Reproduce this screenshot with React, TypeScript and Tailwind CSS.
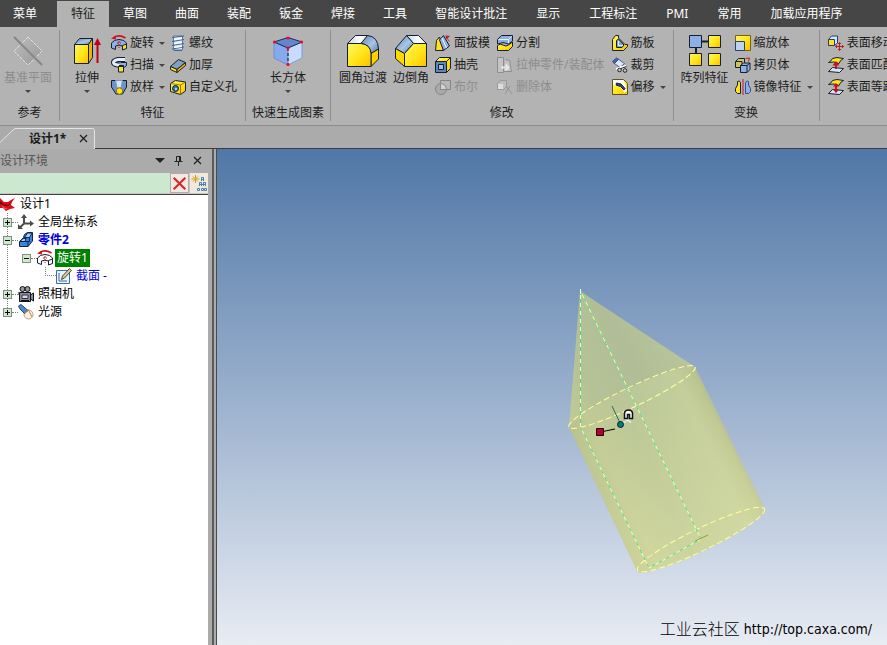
import type { ReactNode } from 'react'
import clsx from 'clsx'

const MENU = ['特征', '草图', '曲面', '装配', '钣金', '焊接', '工具']
const MENU_MORE = ['智能设计批注', '显示', '工程标注', 'PMI', '常用', '加载应用程序']

const K = '#16202c'
const BLUE = '#8fb0e6'
const LIGHT = '#d6e4fa'
const YELLOW = '#ffe11f'
const GOLD = '#f0b400'

function Svg({ size = 16, children }: { size?: number; children: ReactNode }) {
  return (
    <svg width={size} height={size} viewBox={`0 0 ${size} ${size}`} fill="none" stroke={K} strokeLinejoin="round" className="shrink-0" aria-hidden="true">
      {children}
    </svg>
  )
}

/* ---- gradients shared by all icons ---- */
function Defs() {
  return (
    <svg width="0" height="0" className="absolute" aria-hidden="true">
      <defs>
        <linearGradient id="gy" x1="0" y1="0" x2="1" y2="1">
          <stop offset="0" stopColor="#fff36a" />
          <stop offset=".5" stopColor="#ffe81c" />
          <stop offset="1" stopColor="#ffbe00" />
        </linearGradient>
        <linearGradient id="gb" x1="0" y1="0" x2="1" y2="1">
          <stop offset="0" stopColor="#5a82b4" />
          <stop offset=".55" stopColor="#a9c6e8" />
          <stop offset="1" stopColor="#4d77a8" />
        </linearGradient>
        <linearGradient id="gw" x1="0" y1="0" x2="1" y2="0">
          <stop offset="0" stopColor="#c4d4e4" />
          <stop offset=".6" stopColor="#ffffff" />
          <stop offset="1" stopColor="#dce8f4" />
        </linearGradient>
        <linearGradient id="gg" x1="0" y1="0" x2="1" y2="1">
          <stop offset="0" stopColor="#c2c2c2" />
          <stop offset="1" stopColor="#8f8f8f" />
        </linearGradient>
      </defs>
    </svg>
  )
}

/* ---- large icons ---- */
const PlaneIcon = () => (
  <Svg size={32}>
    <path d="M2 2 30 30" stroke="#858585" strokeWidth="2" />
    <path d="M16 2 30 16 16 30 2 16Z" fill="url(#gg)" fillOpacity=".75" stroke="#e2e2e2" strokeDasharray="3 1" />
    <path d="M8 8 24 24" stroke="#8a8a8a" strokeWidth="2" />
  </Svg>
)

const ExtrudeIcon = () => (
  <Svg size={32}>
    <path d="M3.5 9.5H17.5V28.5H3.5Z" fill="url(#gy)" />
    <path d="M3.5 9.5 8.5 3.5H21.5L17.5 9.5Z" fill="url(#gb)" />
    <path d="M17.5 9.5 21.5 3.5V22.5L17.5 28.5Z" fill={GOLD} />
    <path d="M26.5 8V28" stroke="#c00010" strokeWidth="2" />
    <path d="M26.5 3 30 10H23Z" fill="#c00010" stroke="none" />
  </Svg>
)

const CuboidIcon = () => (
  <Svg size={32}>
    <path d="M2 7V23L16 30V13Z" fill="#86a9f0" stroke="#6f8fd0" />
    <path d="M30 7V23L16 30V13Z" fill="#c9dcfb" stroke="#7f9cd6" />
    <path d="M2 7 16 2.500 30 7 16 13Z" fill="#6685cc" stroke="#1c2a55" />
    <path d="M16 13V29" stroke="#101010" strokeDasharray="3 2" />
    <g fill="#f00818" stroke="none">
      <circle cx="2.500" cy="7" r="1.600" />
      <circle cx="16" cy="3" r="1.600" />
      <circle cx="29.500" cy="7" r="1.600" />
      <circle cx="16" cy="13" r="1.600" />
      <circle cx="16" cy="29.500" r="1.600" />
    </g>
  </Svg>
)

const FilletIcon = () => (
  <Svg size={32}>
    <path d="M.5 8.500 8.500.5H21L14 8.500Z" fill="url(#gw)" />
    <path d="M14 8.500Q23.500 9.500 24 18.500L31.500 14Q31 1.500 20.500.5Z" fill="url(#gb)" />
    <path d="M24 18.500 31.500 14V24L24 31.500Z" fill="#ffd000" />
    <path d="M.5 8.500H14Q23.500 9.500 24 18.500V31.500H.5Z" fill="url(#gy)" />
  </Svg>
)

const ChamferIcon = () => (
  <Svg size={32}>
    <path d="M11.500.5H23.500L31.500 8.500H18.500Z" fill="url(#gw)" />
    <path d="M.5 13.500 11.500.5 18.500 8.500 9.500 18.500Z" fill="url(#gb)" />
    <path d="M.5 13.500 9.500 18.500V31.500L.5 23.500Z" fill="#ffd800" />
    <path d="M9.500 18.500 18.500 8.500H31.500V31.500H9.500Z" fill="url(#gy)" />
  </Svg>
)

const ArrayIcon = () => (
  <Svg size={32}>
    <path d="M12 6.500H20M7 12V20" strokeWidth="2" />
    <path d="M.5.5H12.500V12.500H.5Z" fill={BLUE} />
    <path d="M19.500.5H31.500V12.500H19.500Z" fill="url(#gy)" />
    <path d="M.5 18.500H12.500V30.500H.5Z" fill="url(#gy)" />
    <path d="M19.500 18.500H31.500V30.500H19.500Z" fill="url(#gy)" />
  </Svg>
)

/* ---- small icons ---- */
const RevolveIcon = ({ plain = false }: { plain?: boolean }) => (
  <Svg>
    <path d="M.5 8Q3 4.500 8 4.500T15.500 8V13L11.500 14.500V11Q8 9.500 4.500 11V14.500L.5 13Z" fill={plain ? '#fff' : BLUE} />
    <path d="M11.500 10.500 15.500 9V13.500L11.500 15Z" fill={plain ? '#fff' : YELLOW} />
    <path d="M8 6V13M6 8H10" stroke="#c01020" strokeDasharray="2 1" />
    <path d="M3 2.500Q8-1 14.500 3" stroke="#d01020" strokeWidth="1.500" />
    <path d="M0 3.500 4.500.5 5 4.500Z" fill="#d01020" stroke="none" />
  </Svg>
)

const SweepIcon = () => (
  <Svg>
    <path d="M14 2.500H7Q2.500 3.500 2.500 5.500T7 8H13" strokeWidth="5" />
    <path d="M14 2.500H7Q2.500 3.500 2.500 5.500T7 8H13" stroke="#e2edf8" strokeWidth="3" />
    <path d="M10 5.500H15.500V8.500L12.500 11V8.500H8" fill={BLUE} />
    <path d="M7.500 9.500H12.500V15H7.500Z" fill={YELLOW} />
  </Svg>
)

const LoftIcon = () => (
  <Svg>
    <path d="M.5 1.500H15.500V8L11.500 15H5L.5 8Z" fill="#6c94cc" />
    <path d="M4.500 1.500H11.500L10 9H6Z" fill={LIGHT} stroke="#7795bd" />
    <circle cx="8.500" cy="12" r="3.200" fill={YELLOW} stroke="#8a7400" />
  </Svg>
)

const ThreadIcon = () => (
  <Svg>
    <path d="M3.500 1V15H12.500V1Z" fill="#dbe8f6" stroke="#5a7ba4" />
    <path d="M2 2.500 14 1M2 6.500 14 4.500M2 10.500 14 8.500M2 14 14 12M4 15.500H12" stroke="#44658f" />
    <path d="M4 4.500 12 3.500M4 8.500 12 7.500M4 12.500 12 11.500" stroke="#fff" />
  </Svg>
)

const ThickenIcon = () => (
  <Svg>
    <path d="M.5 9.500 8.500 2.500 15.500 5.500 7 12.500Z" fill="#7f9fc4" />
    <path d="M.5 9.500 7 12.500V15.500L.5 12.500Z" fill={YELLOW} />
    <path d="M7 12.500 15.500 5.500V8.500L7 15.500Z" fill={GOLD} />
  </Svg>
)

const HoleIcon = () => (
  <Svg>
    <path d="M.5 4.500 5.500 1.500 15.500 3V12L10.500 15.500.5 12.500Z" fill="url(#gy)" />
    <path d="M10.500 6 15.500 3M10.500 6V15.500M.5 4.500 10.500 6" stroke="#a07800" />
    <circle cx="5.500" cy="9.500" r="3" fill="#3d74b0" />
    <circle cx="6" cy="10" r="1.200" fill="#a8d0f0" stroke="none" />
  </Svg>
)

const DraftIcon = () => (
  <Svg>
    <path d="M1.500 5.500 4.500 2 8.500 15.500H.5Z" fill={YELLOW} />
    <path d="M4.500 5 8.500.5 14.500 11 8.500 15.500Z" fill={BLUE} />
    <path d="M7 3 11.500 13" stroke="#fff" />
    <path d="M11 2 15 7" stroke="#b02028" strokeDasharray="2 1" />
    <path d="M10.500.5 15 1 11.500 4.500Z" fill="#b02028" stroke="none" />
  </Svg>
)

const ShellIcon = () => (
  <Svg>
    <path d="M.5 4.500 4.500.5H15.500V11.500L11.500 15.500Z" fill="url(#gy)" />
    <path d="M.5 4.500H11.500V15.500H.5Z" fill="#5f86b8" />
    <path d="M3.500 7.500H8.500V12.500H3.500Z" fill="#9dbfe8" />
    <path d="M11.500 4.500 15.500.5" />
  </Svg>
)

const BooleanIcon = () => (
  <Svg>
    <circle cx="6" cy="10" r="5.500" stroke="#858585" fill="#aaa" />
    <path d="M5.500 1.500H15.500V10.500H5.500Z" stroke="#858585" fill="#b8b8b8" />
    <path d="M5.500 4.500Q11 5 11.500 10.500H5.500Z" fill="#d2d2d2" stroke="#8a8a8a" />
  </Svg>
)

const SplitIcon = () => (
  <Svg>
    <path d="M.5 4.500 4.500 .5H15.500V6L11.500 9 6 7.500.5 9Z" fill={BLUE} />
    <path d="M1.500 4.500H11.500L14.500 1.500M11.500 4.500V8" stroke="#e8f2ff" />
    <path d="M.5 10.500Q3 8 6 10T11.500 10L15.500 7V11.500L11.500 15.500H.5Z" fill="url(#gy)" />
  </Svg>
)

const ExtrudePartIcon = () => (
  <Svg>
    <path d="M.5.5H6.500V15.500H.5ZM8.500 2.500 12.500 3.500 14.500 14.500H6.500" stroke="#8e8e8e" fill="#c4c4c4" />
    <path d="M4 10.500H11M8.500 7.500 11.500 10.500 8.500 13.500" stroke="#e6e6e6" strokeWidth="2" />
  </Svg>
)

const DeleteBodyIcon = () => (
  <Svg>
    <path d="M.5 4.500 3.500 1.500H9.500V7.500L6.500 10.500H.5Z" stroke="#999" fill="#bdbdbd" />
    <path d="M1 5H6V10H1Z" fill="#dedede" stroke="none" />
    <path d="M9 7 15 15M13 7 8 15" stroke="#929292" />
  </Svg>
)

const RibIcon = () => (
  <Svg>
    <path d="M.5 4.500 3.500.5H6.500V3L13 9.500H15.500V11.500L11.500 15.500H.5Z" fill="url(#gy)" />
    <path d="M4.500 5.500 6.500 4 12 10 10 12.500H4.500Z" fill="#7ba0d4" />
    <path d="M6.500 6V10.500H11" stroke="#e8f2ff" />
  </Svg>
)

const TrimIcon = () => (
  <Svg>
    <path d="M1 5.500 5.500 1.500 12.500 6.500 8 10.500Z" fill="#dce6f6" stroke="#4c6290" />
    <path d="M.5 4.500 4.500 1 6.500 2.500 2.500 6.500Z" fill="#4a68a4" stroke="#3a5080" />
    <path d="M4 12 14 9M8 9.500 13 13" stroke="#fff" strokeWidth="2" />
    <circle cx="7.500" cy="13" r="1.800" stroke="#222" fill="#c8c8c8" />
    <circle cx="13" cy="13.500" r="1.800" stroke="#222" fill="#c8c8c8" />
    <path d="M9 11.500 14.500 9.500" />
  </Svg>
)

const OffsetIcon = () => (
  <Svg>
    <path d="M.5.500H11.500L15.500 4.500V15.500H.5Z" fill="url(#gy)" stroke="#5c5320" />
    <path d="M1 1H11L13 4 15 12 12 14Q10 6 1 6Z" fill="#fff" stroke="none" />
    <path d="M4.500 4 9 5 13 9.500 12 11 8.500 7.500 4 6Z" fill="#2b4a7c" />
  </Svg>
)

const ScaleIcon = () => (
  <Svg>
    <path d="M.5.5H15.500V15.500H.5Z" fill="url(#gy)" stroke="#7a6500" />
    <path d="M.5 6.500H9.500V15.500H.5Z" fill="#bcd3f2" stroke="#25436e" />
  </Svg>
)

const CopyBodyIcon = () => (
  <Svg>
    <path d="M.5 4.500 3.500 1.500H9.500V8.500L7 10.500H.5Z" fill="#cfc45a" />
    <path d="M.5 4.500H7V10.500" />
    <path d="M5.500 8.500 8.500 6H15V12.500L12 15.500H5.500Z" fill={BLUE} />
    <path d="M5.500 8.500H12V15.500M12 8.500 15 6" />
    <path d="M10.500 1.500 14.500 1 13.500 4.500" stroke="#b02028" />
  </Svg>
)

const MirrorIcon = () => (
  <Svg>
    <path d="M.5 9.500 2.500 6V2.500Q5.500 1 5.500 5V14.500H2.500L.5 12.500Z" fill={YELLOW} />
    <path d="M15.500 9.500 13.500 6V2.500Q10.500 1 10.500 5V14.500H13.500L15.500 12.500Z" fill={BLUE} stroke="#2c4f98" />
    <path d="M8 0V16" stroke="#c81828" />
  </Svg>
)

const MoveFaceIcon = () => (
  <Svg>
    <path d="M.5 4.500 3.500 1H9.500V8L6.500 10.500H.5Z" fill={LIGHT} stroke="#23406c" />
    <path d="M.5 4.500H6.500V10.500H.5Z" fill={YELLOW} stroke="#23406c" />
    <path d="M11.500 8V15.500M8 11.500H15.500" stroke="#b82020" />
    <path d="M10 9 11.500 7.500 13 9M10 14 11.500 15.500 13 14M9 10 7.500 11.500 9 13M14 10 15.500 11.500 14 13" stroke="#b82020" />
  </Svg>
)

const FacesBase = () => (
  <>
    <path d="M.5 5.500Q3 4.500 4.500 1.500L9 .5 15.500 1.500Q12 3 11 6.500L6 5Z" fill={YELLOW} />
    <path d="M.5 14.500 4.500 10.500 15.500 11.500 11.500 15.500Z" fill={LIGHT} />
    <path d="M8 6V12" stroke="#c81020" strokeWidth="2" />
  </>
)

const MatchFaceIcon = () => (
  <Svg>
    <FacesBase />
    <path d="M8 4 11.500 8.500H4.500Z" fill="#c81020" stroke="none" />
  </Svg>
)

const EqualFaceIcon = () => (
  <Svg>
    <FacesBase />
    <path d="M8 4 11 7.500H5ZM8 14 11 10.500H5Z" fill="#c81020" stroke="none" />
  </Svg>
)

/* ---- tree icons ---- */
const RootIcon = () => (
  <Svg>
    <g stroke="none">
      <path d="M0 2 4 6 8 6 11 4 15 2 12 6 11 9 15 12 10 13 6 15 3 12 0 12Z" fill="#d8101c" />
      <path d="M0 5 4 8 8 9 11 5 9 10 5 10 0 8Z" fill="#7c0008" />
      <path d="M1 9 5 12 9 12 4 13Z" fill="#ff6a6a" />
    </g>
  </Svg>
)

const AxesIcon = () => (
  <Svg>
    <path d="M6 9V2M6 9.500H14M6 9.500 2 13.500" stroke="#4b4b4b" strokeWidth="2" />
    <path d="M6 0 9 4H3ZM16 9.500 12 6.500V12.500ZM0 15V10L5 15Z" fill="#4b4b4b" stroke="none" />
  </Svg>
)

const PartIcon = () => (
  <Svg>
    <path d="M1.500 9.500 5.500 5.500 6.500 2.500 9.500.5H14.500V9L10 14.500H1.500Z" fill="#3f84d2" stroke="#0d2450" />
    <path d="M6.500 5.500 9.500 1H14L11.500 5.500ZM2 9.500 5 6.500H8L7 9.500Z" fill="#a3d0ff" stroke="#0d2450" />
    <path d="M7 9.500H11.500V5.500M10 14.500V10" stroke="#0d2450" />
  </Svg>
)

const SketchIcon = () => (
  <Svg>
    <path d="M.5 2.500H13.500V15.500H.5Z" fill="#eaf2fc" stroke="#3d6fa5" />
    <path d="M3 5V13H11" stroke="#3d6fa5" />
    <path d="M5.500 11.500 6.500 8 13.500.5 15.500 2.500 8.500 10Z" fill="#d8c890" stroke="#4a4a3a" />
  </Svg>
)

const CameraIcon = () => (
  <Svg>
    <circle cx="4.500" cy="3" r="2.500" fill="#9a9a9a" stroke="#111" />
    <circle cx="9.500" cy="3" r="2.500" fill="#9a9a9a" stroke="#111" />
    <path d="M1.500 6.500H12.500V15.500H1.500ZM12.500 9 15.500 7V15L12.500 13Z" fill="#8c8ca4" stroke="#111" />
    <path d="M4 9H10V12.500H4Z" fill="#d8d8e8" stroke="#333" />
    <path d="M0 6V9M3 14.500H11" stroke="#111" />
  </Svg>
)

const LightIcon = () => (
  <Svg>
    <circle cx="10.500" cy="10.500" r="4.500" fill="#fbeede" stroke="#b9a08a" />
    <path d="M.5 2 3 .5 10 6.500 6.500 9.500 2 5Z" fill="#4c86cc" stroke="#26486e" />
    <path d="M7 9 10.500 6 14 13" stroke="#c98052" />
  </Svg>
)

const FilterIcon = () => (
  <Svg>
    <path d="M4.500 0V8M.5 4H8.500M2 1.500 7 6.500M7 1.500 2 6.500" stroke="#dca018" />
    <path d="M10.500 6V2.500H12.500V6M10.500 4.500H12.500M8.500 11V7.500H10.500V11M12.500 11V7.500H14.500V11M8.500 9.500H14.500" stroke="#4a7eb4" />
    <path d="M6.500 13.500H8.500V15.500H6.500ZM10.500 13.500H12.500V15.500H10.500ZM13.500 13.500H15.500V15.500H13.500Z" stroke="#4a7eb4" />
  </Svg>
)

/* ---- ribbon pieces ---- */
const Caret = () => <span className="h-0 w-0 shrink-0 border-x-[3px] border-t-[3px] border-x-transparent border-t-[#444]" />

type CommandProps = { icon: ReactNode; label: string; menu?: boolean; disabled?: boolean }

function Small({ icon, label, menu, disabled }: CommandProps) {
  return (
    <button disabled={disabled} className={clsx('flex h-[22px] items-center gap-[3px] whitespace-nowrap', disabled && 'text-[#8c8c8c]')}>
      {icon}
      <span>{label}</span>
      {menu && <span className="flex pl-[2px]"><Caret /></span>}
    </button>
  )
}

function Large({ icon, label, menu, disabled }: CommandProps) {
  return (
    <button disabled={disabled} className={clsx('flex h-[66px] flex-col items-center whitespace-nowrap pt-[3px]', disabled && 'text-[#8c8c8c]')}>
      {icon}
      <span className="mt-[3px] h-4 leading-4">{label}</span>
      {menu && <span className="mt-1 flex"><Caret /></span>}
    </button>
  )
}

function Group({ title, className, children }: { title: string; className?: string; children: ReactNode }) {
  return (
    <section aria-label={title} className="flex shrink-0 flex-col border-r border-[#8f8f8f]">
      <div className={clsx('flex h-[68px] pt-[2px]', className)}>{children}</div>
      <h2 className="mt-[6px] min-h-[18px] whitespace-nowrap px-[6px] text-center leading-[18px]">{title}</h2>
    </section>
  )
}

function Ribbon() {
  return (
    <div className="flex h-[99px] shrink-0 overflow-hidden border-b border-[#8c8c8c] bg-[#b3b3b3] pt-[3px] pb-1">
      <Group title="参考" className="pr-[7px] pl-1">
        <Large icon={<PlaneIcon />} label="基准平面" menu disabled />
      </Group>
      <Group title="特征" className="pr-2 pl-[11px]">
        <Large icon={<ExtrudeIcon />} label="拉伸" menu />
        <div className="ml-2 flex flex-col items-start">
          <Small icon={<RevolveIcon />} label="旋转" menu />
          <Small icon={<SweepIcon />} label="扫描" menu />
          <Small icon={<LoftIcon />} label="放样" menu />
        </div>
        <div className="ml-[5px] flex flex-col items-start">
          <Small icon={<ThreadIcon />} label="螺纹" />
          <Small icon={<ThickenIcon />} label="加厚" />
          <Small icon={<HoleIcon />} label="自定义孔" />
        </div>
      </Group>
      <Group title="快速生成图素" className="justify-center px-[6px]">
        <Large icon={<CuboidIcon />} label="长方体" menu />
      </Group>
      <Group title="修改" className="pr-[7px] pl-2">
        <Large icon={<FilletIcon />} label="圆角过渡" />
        <div className="mr-[6px] ml-[6px] flex">
          <Large icon={<ChamferIcon />} label="边倒角" />
        </div>
        <div className="flex flex-col items-start">
          <Small icon={<DraftIcon />} label="面拔模" />
          <Small icon={<ShellIcon />} label="抽壳" />
          <Small icon={<BooleanIcon />} label="布尔" disabled />
        </div>
        <div className="ml-[7px] flex flex-col items-start">
          <Small icon={<SplitIcon />} label="分割" />
          <Small icon={<ExtrudePartIcon />} label="拉伸零件/装配体" disabled />
          <Small icon={<DeleteBodyIcon />} label="删除体" disabled />
        </div>
        <div className="ml-[7px] flex flex-col items-start">
          <Small icon={<RibIcon />} label="筋板" />
          <Small icon={<TrimIcon />} label="裁剪" />
          <Small icon={<OffsetIcon />} label="偏移" menu />
        </div>
      </Group>
      <Group title="变换" className="pr-[6px] pl-[7px]">
        <Large icon={<ArrayIcon />} label="阵列特征" />
        <div className="ml-[6px] flex flex-col items-start">
          <Small icon={<ScaleIcon />} label="缩放体" />
          <Small icon={<CopyBodyIcon />} label="拷贝体" />
          <Small icon={<MirrorIcon />} label="镜像特征" menu />
        </div>
      </Group>
      <div className="flex shrink-0 flex-col items-start pt-[2px] pl-[8px]">
        <Small icon={<MoveFaceIcon />} label="表面移动" />
        <Small icon={<MatchFaceIcon />} label="表面匹配" />
        <Small icon={<EqualFaceIcon />} label="表面等距" />
      </div>
    </div>
  )
}

/* ---- design tree ---- */
function Toggle({ open }: { open: boolean }) {
  return (
    <button aria-label={open ? '折叠' : '展开'} className="relative ml-[3px] flex size-[9px] shrink-0 items-center justify-center border border-[#7d907d] bg-[#cfe8cf]">
      <span className="absolute h-px w-[5px] bg-black" />
      {!open && <span className="absolute h-[5px] w-px bg-black" />}
    </button>
  )
}

const Dots = () => <span className="w-[6px] shrink-0 border-t border-dotted border-[#808080]" />

function Node({ icon, open = false, children }: { icon: ReactNode; open?: boolean; children: ReactNode }) {
  return (
    <div className="flex h-[18px] items-center">
      <Toggle open={open} />
      <Dots />
      {icon}
      <span className="ml-1 leading-[18px]">{children}</span>
    </div>
  )
}

function Tree() {
  return (
    <div className="flex-1 overflow-hidden bg-white text-black">
      <div className="flex h-[18px] items-center">
        <RootIcon />
        <span className="ml-1">设计1</span>
      </div>
      <div className="relative">
        <span className="absolute top-0 left-[7px] h-[99px] border-l border-dotted border-[#808080]" />
        <Node icon={<AxesIcon />}>全局坐标系</Node>
        <Node icon={<PartIcon />} open>
          <b className="text-[#0000d8]">零件2</b>
        </Node>
        <div className="pl-[19px]">
          <Node icon={<RevolveIcon plain />} open>
            <span className="-ml-[2px] block bg-[#008000] px-[2px] text-white">旋转1</span>
          </Node>
          <div className="flex h-[18px] items-center pl-[26px]">
            <span className="mb-[9px] h-[9px] w-[11px] border-b border-l border-dotted border-[#808080]" />
            <SketchIcon />
            <span className="ml-1 text-[#0000d8]">截面 -</span>
          </div>
        </div>
        <Node icon={<CameraIcon />}>照相机</Node>
        <Node icon={<LightIcon />}>光源</Node>
      </div>
    </div>
  )
}

const Cross = ({ color = '#222', size = 9 }: { color?: string; size?: number }) => (
  <svg width={size} height={size} viewBox="0 0 9 9" stroke={color} strokeWidth="1.250" aria-hidden="true">
    <path d="M1 1 8 8M8 1 1 8" />
  </svg>
)

function SidePanel() {
  return (
    <aside className="flex w-52 shrink-0 flex-col">
      <div className="flex h-6 items-center bg-[#ababab] pr-px pb-px">
        <h2 className="flex-1 text-[#555]">设计环境</h2>
        <button aria-label="选项" className="flex w-[19px] justify-center">
          <span className="border-x-[5px] border-t-[5px] border-x-transparent border-t-[#222]" />
        </button>
        <button aria-label="固定" className="flex w-[19px] justify-center">
          <svg width="9" height="10" viewBox="0 0 9 10" fill="none" stroke="#222" aria-hidden="true">
            <path d="M2.500 5.500V.5H6.500V5.500M.5 5.500H8.500M4.500 6V10M5.500 1V5" />
          </svg>
        </button>
        <button aria-label="关闭面板" className="flex w-[19px] justify-center">
          <Cross />
        </button>
      </div>
      <div className="flex h-[22px] items-start border-b border-[#444] bg-[#c4c4c4]">
        <input aria-label="查找" className="h-5 min-w-0 flex-1 bg-[#cce8cf] px-1 outline-none" />
        <button aria-label="清除" className="flex h-5 w-[19px] items-center justify-center border border-[#b9aaa6] bg-[#f3e9e2]">
          <Cross color="#d42a2a" size={15} />
        </button>
        <button aria-label="筛选" className="ml-px flex h-5 w-[18px] items-center justify-center bg-[#efe9dc]">
          <FilterIcon />
        </button>
      </div>
      <Tree />
    </aside>
  )
}

/* ---- 3D view ---- */
function Viewport() {
  return (
    <main className="relative flex-1 overflow-hidden bg-linear-to-b from-[#5077a6] to-[#e8ecf3]">
      <svg viewBox="217 149 670 496" className="absolute inset-0 h-full w-full" fill="none" role="img" aria-label="零件2">
        <defs>
          <linearGradient id="cone" gradientUnits="userSpaceOnUse" x1="569" y1="427" x2="695" y2="367">
            <stop offset="0" stopColor="#c3cc94" />
            <stop offset=".25" stopColor="#b6c296" />
            <stop offset=".6" stopColor="#b1bd96" />
            <stop offset="1" stopColor="#b9c59a" />
          </linearGradient>
          <linearGradient id="body" gradientUnits="userSpaceOnUse" x1="603" y1="498" x2="730" y2="438">
            <stop offset="0" stopColor="#b9c28e" />
            <stop offset=".14" stopColor="#c1ca96" />
            <stop offset=".4" stopColor="#bac697" />
            <stop offset=".85" stopColor="#c2cd9c" />
            <stop offset=".96" stopColor="#bac490" />
            <stop offset="1" stopColor="#b0ba94" />
          </linearGradient>
          <linearGradient id="glow" gradientUnits="userSpaceOnUse" x1="630" y1="400" x2="700" y2="550">
            <stop offset="0" stopColor="#e4e6a8" stopOpacity="0" />
            <stop offset="1" stopColor="#e4e6a8" stopOpacity=".45" />
          </linearGradient>
        </defs>
        <path d="M580 291 695 367A70 10 -25.500 0 1 569 427Z" fill="url(#cone)" />
        <path d="M569 427A70 10 -25.500 0 1 695 367L765 509A71 11 -25.800 0 1 637 571Z" fill="url(#body)" />
        <path d="M569 427A70 10 -25.500 0 1 695 367L765 509A71 11 -25.800 0 1 637 571Z" fill="url(#glow)" />
        <g stroke="#ffffa0" strokeDasharray="6 3">
          <ellipse cx="632" cy="397" rx="70" ry="10" transform="rotate(-25.500 632 397)" />
          <ellipse cx="701" cy="539.500" rx="70.500" ry="11" transform="rotate(-25.800 701 539.500)" />
        </g>
        <path d="M580.500 291V427L649 568 701 539Z" stroke="#ffff9a" />
        <path d="M580.500 291V427L649 568 701 539Z" stroke="#35d9b0" strokeDasharray="4 4" />
        <path d="M695 541 708 535" stroke="#a09a38" />
        <path d="M580.500 289V294" stroke="#fff" />
        <path d="M612 406 620 423" stroke="#27705f" />
        <path d="M603 431.500 615 429" stroke="#000" />
        <path d="M623 423 632 418M625 419 632 423" stroke="#e8eee0" strokeWidth="1.500" strokeDasharray="3 1" />
        <circle cx="620.500" cy="424.500" r="3" fill="#067a78" stroke="#023" />
        <path d="M596.500 428.500H603.500V435.500H596.500Z" fill="#b4002e" stroke="#200" />
        <path d="M624.500 418.500V413Q625 410 628.500 410T632.500 413V418.500H629.500V414.500H627.500V418.500Z" fill="#fff" stroke="#111" strokeWidth="1.500" />
      </svg>
      <a href="http://top.caxa.com/" className="absolute right-[15px] bottom-[6px] flex items-center gap-1 whitespace-nowrap text-black">
        <span className="text-[16px] leading-5 font-light">工业云社区</span>
        <span className="font-['DejaVu_Sans_Condensed','DejaVu_Sans',sans-serif] text-[14px] leading-5 font-stretch-condensed">http://top.caxa.com/</span>
      </a>
    </main>
  )
}

export default function App() {
  return (
    <div className="flex h-screen w-full flex-col overflow-hidden bg-[#ababab] font-['Noto_Sans','Noto_Sans_CJK_SC',sans-serif] text-[12px] leading-4 text-[#1c1c1c]">
      <Defs />
      <nav className="flex h-[27px] shrink-0 overflow-hidden bg-[#464646] pt-px text-white">
        <button className="shrink-0 pr-5 pl-[13px]">菜单</button>
        {MENU.map((item, i) => (
          <button key={item} className={clsx('shrink-0 whitespace-nowrap px-[14px]', i === 0 && 'bg-[#b3b3b3] text-[#1c1c1c]')}>
            {item}
          </button>
        ))}
        {MENU_MORE.map((item) => (
          <button key={item} className="shrink-0 whitespace-nowrap pr-[15px] pl-[14px]">
            {item}
          </button>
        ))}
      </nav>
      <Ribbon />

      {/* document tabs */}
      <div className="flex h-[23px] shrink-0 items-end">
        <div className="relative flex h-[21px] w-[95px] shrink-0 items-center">
          <svg width="95" height="21" viewBox="0 0 95 21" className="absolute inset-0" aria-hidden="true">
            <path d="M0 21V14.500L13.500 1.500Q14.500.5 16 .5H92.500Q94.500.5 94.500 2.500V21Z" fill="#b0b0b0" />
            <path d="M0 14.500 13.500 1.500Q14.500.5 16 .5H92.500Q94.500.5 94.500 2.500V21" fill="none" stroke="#e4e4e4" />
          </svg>
          <button className="relative ml-[29px] font-bold">设计1*</button>
          <button aria-label="关闭" className="relative ml-auto pr-[7px]">
            <Cross />
          </button>
        </div>
        <div className="h-px flex-1 bg-[#3c3c3c]" />
      </div>

      <div className="flex min-h-0 flex-1">
        <SidePanel />
        <div className="flex w-[9px] shrink-0 border-r border-[#4a4a4a] bg-[#ababab] pl-1">
          <div className="w-[2px] bg-[#5c5c5c]" />
        </div>
        <Viewport />
      </div>
    </div>
  )
}
